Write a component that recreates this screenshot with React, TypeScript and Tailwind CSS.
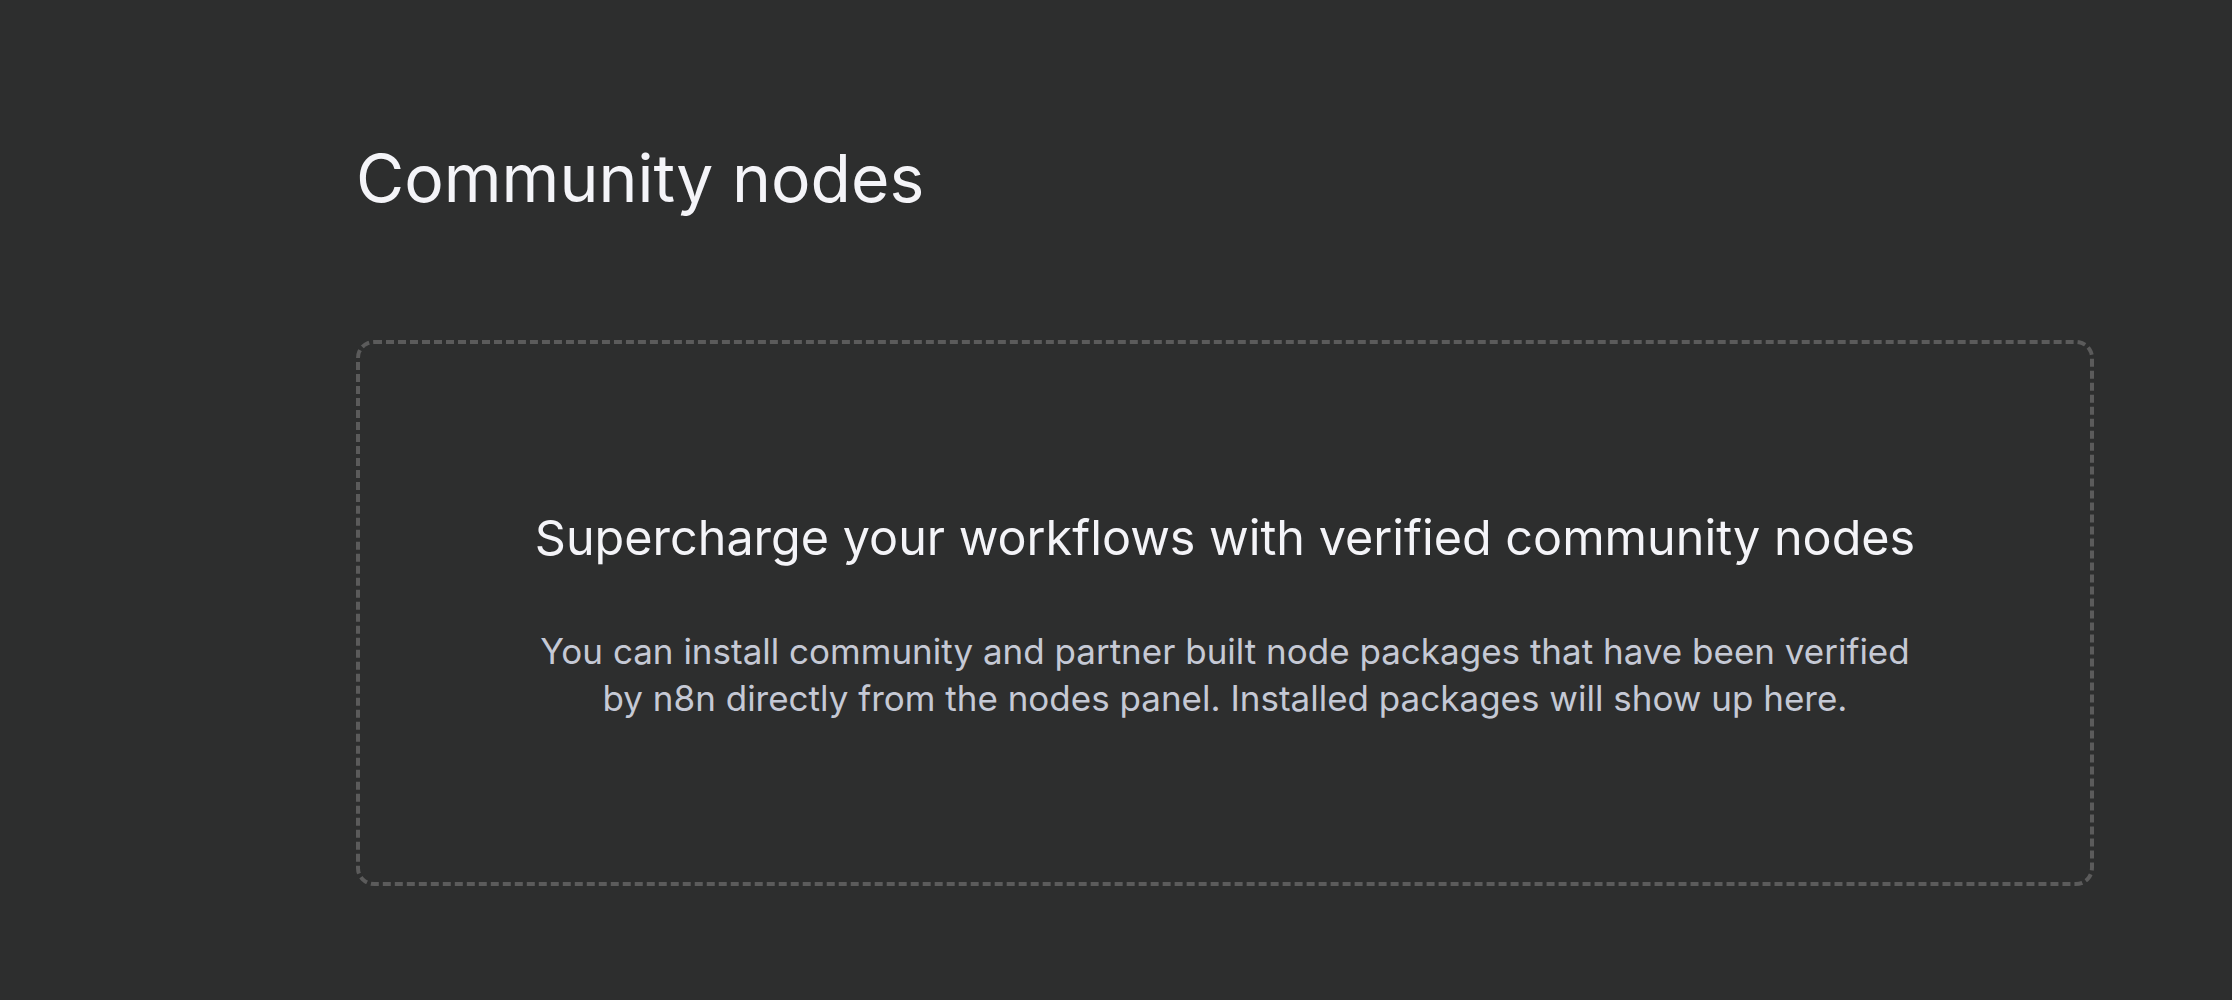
export default function App() {
  return (
    <div className="min-h-screen w-full bg-[#2d2e2e] font-['Inter','Noto_Sans',sans-serif]">
      <div className="pl-[356px] pr-[138px] pt-[132px]">
        <h1 className="text-[66px] leading-[92px] font-normal text-[#f4f4f8]">
          Community nodes
        </h1>
        <div className="mt-[116px] flex h-[546px] flex-col items-center justify-center rounded-[18px] border-4 border-dashed border-[#5b5b5b] px-8 pt-[6px]">
          <h2 className="text-center text-[48.5px] leading-[56px] text-[#f4f4f8]">
            Supercharge your workflows with verified community nodes
          </h2>
          <p className="mt-[62px] max-w-[1395px] text-center text-[35px] leading-[47px] text-[#c5c9d5]">
            You can install community and partner built node packages that have
            been verified by n8n directly from the nodes panel. Installed
            packages will show up here.
          </p>
        </div>
      </div>
    </div>
  )
}
